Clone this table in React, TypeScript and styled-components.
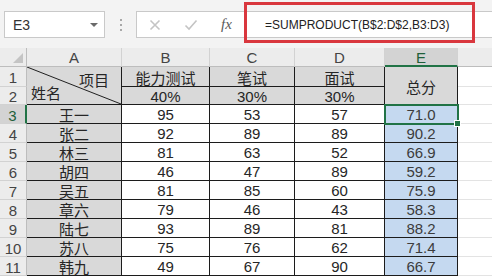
import React from 'react';
import styled, { createGlobalStyle, css } from 'styled-components';

const GlobalStyle = createGlobalStyle`
  html, body {
    margin: 0;
    padding: 0;
    background: #fff;
  }
  body {
    font-family: "Liberation Sans", "Noto Sans CJK SC", sans-serif;
    overflow: hidden;
  }
`;

const EXCEL_GREEN = '#217346';
const WEIGHTS = [0.4, 0.3, 0.3];

const rows = [
  { name: '王一', scores: [95, 53, 57] },
  { name: '张二', scores: [92, 89, 89] },
  { name: '林三', scores: [81, 63, 52] },
  { name: '胡四', scores: [46, 47, 89] },
  { name: '吴五', scores: [81, 85, 60] },
  { name: '章六', scores: [79, 46, 43] },
  { name: '陆七', scores: [93, 89, 81] },
  { name: '苏八', scores: [75, 76, 62] },
  { name: '韩九', scores: [49, 67, 90] },
];

const sumProduct = (scores: number[]) =>
  scores.reduce((acc, s, i) => acc + s * WEIGHTS[i], 0).toFixed(1);

const Window = styled.div`
  width: 492px;
  height: 277px;
  overflow: hidden;
  background: #fff;
`;

/* ---------- formula bar ---------- */

const FormulaBar = styled.div`
  position: relative;
  height: 48px;
  box-sizing: border-box;
  padding: 11px 0 0 4px;
  display: flex;
  align-items: flex-start;
  background: #f3f3f3;
`;

const NameBox = styled.div`
  width: 101px;
  height: 27px;
  box-sizing: border-box;
  border: 1px solid #c9c9c9;
  background: #fff;
  display: flex;
  align-items: center;
  justify-content: space-between;
  padding: 0 6px 0 8px;
  font-size: 14px;
  color: #333;
`;

const Caret = styled.span`
  width: 0;
  height: 0;
  border-left: 4px solid transparent;
  border-right: 4px solid transparent;
  border-top: 4px solid #6a6a6a;
`;

const Grip = styled.div`
  width: 31px;
  height: 27px;
  display: flex;
  flex-direction: column;
  align-items: center;
  justify-content: center;
  gap: 3px;

  span {
    width: 2px;
    height: 2px;
    background: #a8a8a8;
  }
`;

const FormulaBox = styled.div`
  flex: 1;
  height: 27px;
  box-sizing: border-box;
  border: 1px solid #c9c9c9;
  border-right: none;
  background: #fff;
  display: flex;
  align-items: center;
  padding-left: 12px;
`;

const ToolIcon = styled.span`
  width: 35px;
  display: flex;
  align-items: center;
  justify-content: flex-start;
`;

const Fx = styled.span`
  width: 32px;
  font-family: "Liberation Serif", serif;
  font-style: italic;
  font-size: 15px;
  color: #5a5a5a;
  padding-left: 2px;
`;

const FormulaText = styled.span`
  margin-left: 12px;
  font-size: 12px;
  color: #222;
  white-space: nowrap;
`;

/* red annotation frame drawn over the formula input */
const Callout = styled.div`
  position: absolute;
  left: 244px;
  top: 2px;
  width: 231px;
  height: 41px;
  box-sizing: border-box;
  border: 3px solid #d9373e;
  pointer-events: none;
`;

/* ---------- sheet grid ---------- */

const Sheet = styled.div`
  display: grid;
  grid-template-columns: 27px 95px 88px 85px 90px 73px 73px;
  grid-template-rows: 19px 20px 18px repeat(9, 19px);
`;

const HeaderCell = styled.div<{ $active?: boolean; $side?: 'col' | 'row' }>`
  box-sizing: border-box;
  display: flex;
  align-items: center;
  justify-content: center;
  background: #ececec;
  color: #444;
  font-size: 15px;
  border-right: 1px solid #d2d2d2;
  border-bottom: 1px solid #d2d2d2;
  ${(p) =>
    p.$side === 'row' &&
    css`
      border-right: 1px solid #bdbdbd;
      padding-top: 2px;
    `}
  ${(p) =>
    p.$side === 'col' &&
    css`
      border-bottom: 1px solid #bdbdbd;
      padding-top: 1px;
    `}
  ${(p) =>
    p.$active &&
    css`
      background: #d3d3d3;
      color: #1f5f3a;
    `}
  ${(p) =>
    p.$active &&
    p.$side === 'col' &&
    css`
      border-bottom: 2px solid ${EXCEL_GREEN};
    `}
  ${(p) =>
    p.$active &&
    p.$side === 'row' &&
    css`
      border-right: 2px solid ${EXCEL_GREEN};
    `}
`;

const Corner = styled(HeaderCell)`
  position: relative;
  border-right: 1px solid #bdbdbd;
  border-bottom: 1px solid #bdbdbd;

  &::after {
    content: '';
    position: absolute;
    right: 3px;
    bottom: 3px;
    width: 0;
    height: 0;
    border-left: 10px solid transparent;
    border-bottom: 10px solid #c4c4c4;
  }
`;

type Fill = 'gray' | 'blue' | 'white';

const fills: Record<Fill, string> = {
  gray: '#d9d9d9',
  blue: '#c5d9f0',
  white: '#ffffff',
};

const Cell = styled.div<{ $fill?: Fill; $span?: number; $selected?: boolean }>`
  position: relative;
  box-sizing: border-box;
  display: flex;
  align-items: center;
  justify-content: center;
  padding-top: 1px;
  background: ${(p) => fills[p.$fill || 'white']};
  color: ${(p) => (p.$fill === 'blue' ? '#3c3c3c' : '#262626')};
  font-size: 15px;
  border-right: 1px solid #1c1c1c;
  border-bottom: 1px solid #1c1c1c;
  ${(p) => p.$span && css`grid-row: span ${p.$span};`}
  ${(p) =>
    p.$selected &&
    css`
      outline: 2px solid ${EXCEL_GREEN};
      outline-offset: -1px;
      z-index: 1;

      &::after {
        content: '';
        position: absolute;
        right: -4px;
        bottom: -4px;
        width: 5px;
        height: 5px;
        background: ${EXCEL_GREEN};
        border: 1px solid #fff;
      }
    `}
`;

const BlankCell = styled.div`
  box-sizing: border-box;
  border-right: 1px solid #e3e3e3;
  border-bottom: 1px solid #e3e3e3;
`;

const DiagonalCell = styled(Cell)`
  grid-row: span 2;
  display: block;
  padding: 0;
  overflow: hidden;
`;

const CornerLabel = styled.span<{ $pos: 'top' | 'bottom' }>`
  position: absolute;
  ${(p) =>
    p.$pos === 'top'
      ? css`
          top: 2px;
          right: 12px;
        `
      : css`
          bottom: 1px;
          left: 4px;
        `}
`;

const Diagonal = styled.svg`
  position: absolute;
  inset: 0;
  width: 100%;
  height: 100%;
`;

const CrossIcon = () => (
  <svg width="12" height="12" viewBox="0 0 12 12">
    <path d="M1.5 1.5 L10.5 10.5 M10.5 1.5 L1.5 10.5" stroke="#c4c4c4" strokeWidth="1.6" fill="none" />
  </svg>
);

const CheckIcon = () => (
  <svg width="14" height="12" viewBox="0 0 14 12">
    <path d="M1.5 6.5 L5 10 L12.5 1.5" stroke="#c4c4c4" strokeWidth="1.6" fill="none" />
  </svg>
);

// F header stays blank: only a sliver of that column is on screen
const columns = ['A', 'B', 'C', 'D', 'E', ''];

export default function App() {
  return (
    <Window>
      <GlobalStyle />
      <FormulaBar>
        <NameBox>
          E3
          <Caret />
        </NameBox>
        <Grip>
          <span />
          <span />
          <span />
        </Grip>
        <FormulaBox>
          <ToolIcon>
            <CrossIcon />
          </ToolIcon>
          <ToolIcon>
            <CheckIcon />
          </ToolIcon>
          <Fx>fx</Fx>
          <FormulaText>=SUMPRODUCT(B$2:D$2,B3:D3)</FormulaText>
        </FormulaBox>
        <Callout />
      </FormulaBar>

      <Sheet>
        <Corner $side="col" />
        {columns.map((c, i) => (
          <HeaderCell key={i} $side="col" $active={c === 'E'}>
            {c}
          </HeaderCell>
        ))}

        {/* rows 1-2: headings and weights */}
        <HeaderCell $side="row">1</HeaderCell>
        <DiagonalCell $fill="gray">
          <Diagonal viewBox="0 0 95 38" preserveAspectRatio="none">
            <line x1="0" y1="0" x2="95" y2="38" stroke="#1c1c1c" strokeWidth="1" />
          </Diagonal>
          <CornerLabel $pos="top">项目</CornerLabel>
          <CornerLabel $pos="bottom">姓名</CornerLabel>
        </DiagonalCell>
        <Cell $fill="gray">能力测试</Cell>
        <Cell $fill="gray">笔试</Cell>
        <Cell $fill="gray">面试</Cell>
        <Cell $fill="gray" $span={2}>总分</Cell>
        <BlankCell />

        <HeaderCell $side="row">2</HeaderCell>
        {WEIGHTS.map((w, i) => (
          <Cell key={i} $fill="gray">
            {Math.round(w * 100)}%
          </Cell>
        ))}
        <BlankCell />

        {rows.map((r, i) => (
          <React.Fragment key={r.name}>
            <HeaderCell $side="row" $active={i === 0}>
              {i + 3}
            </HeaderCell>
            <Cell $fill="gray">{r.name}</Cell>
            {r.scores.map((s, j) => (
              <Cell key={j}>{s}</Cell>
            ))}
            <Cell $fill="blue" $selected={i === 0}>
              {sumProduct(r.scores)}
            </Cell>
            <BlankCell />
          </React.Fragment>
        ))}
      </Sheet>
    </Window>
  );
}
